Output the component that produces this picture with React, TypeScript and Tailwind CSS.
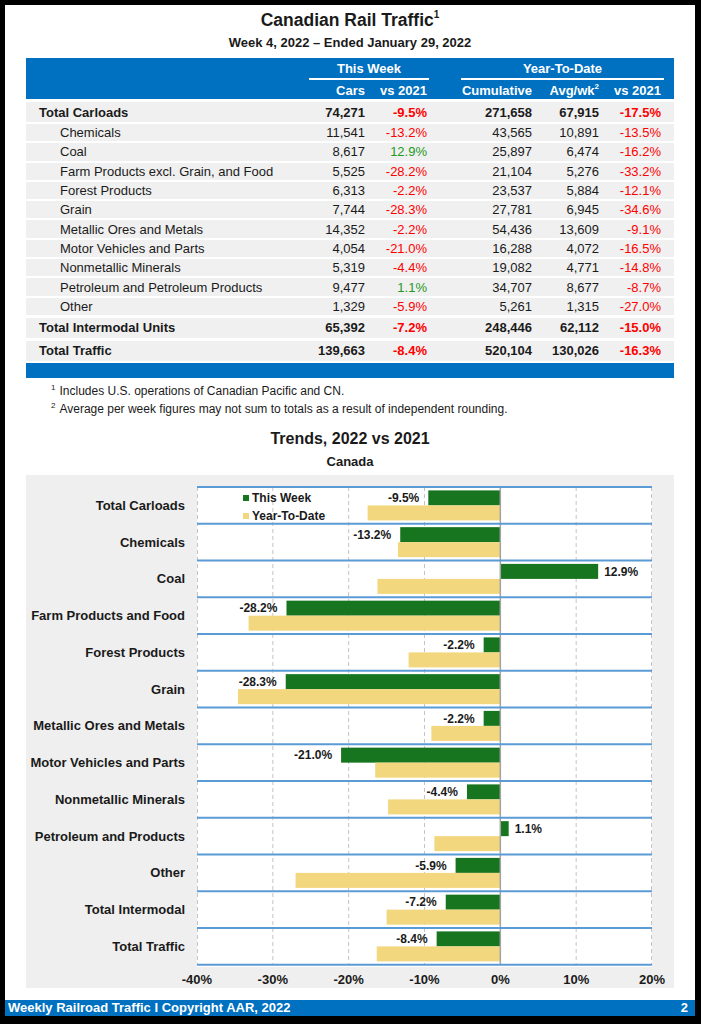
import React from 'react';

type Row = {
  name: string;
  total?: boolean;
  cars: string;
  vs: string;
  cum: string;
  avg: string;
  ytd: string;
};

const rows: Row[] = [
  { name: 'Total Carloads', total: true, cars: '74,271', vs: '-9.5%', cum: '271,658', avg: '67,915', ytd: '-17.5%' },
  { name: 'Chemicals', cars: '11,541', vs: '-13.2%', cum: '43,565', avg: '10,891', ytd: '-13.5%' },
  { name: 'Coal', cars: '8,617', vs: '12.9%', cum: '25,897', avg: '6,474', ytd: '-16.2%' },
  { name: 'Farm Products excl. Grain, and Food', cars: '5,525', vs: '-28.2%', cum: '21,104', avg: '5,276', ytd: '-33.2%' },
  { name: 'Forest Products', cars: '6,313', vs: '-2.2%', cum: '23,537', avg: '5,884', ytd: '-12.1%' },
  { name: 'Grain', cars: '7,744', vs: '-28.3%', cum: '27,781', avg: '6,945', ytd: '-34.6%' },
  { name: 'Metallic Ores and Metals', cars: '14,352', vs: '-2.2%', cum: '54,436', avg: '13,609', ytd: '-9.1%' },
  { name: 'Motor Vehicles and Parts', cars: '4,054', vs: '-21.0%', cum: '16,288', avg: '4,072', ytd: '-16.5%' },
  { name: 'Nonmetallic Minerals', cars: '5,319', vs: '-4.4%', cum: '19,082', avg: '4,771', ytd: '-14.8%' },
  { name: 'Petroleum and Petroleum Products', cars: '9,477', vs: '1.1%', cum: '34,707', avg: '8,677', ytd: '-8.7%' },
  { name: 'Other', cars: '1,329', vs: '-5.9%', cum: '5,261', avg: '1,315', ytd: '-27.0%' },
  { name: 'Total Intermodal Units', total: true, cars: '65,392', vs: '-7.2%', cum: '248,446', avg: '62,112', ytd: '-15.0%' },
  { name: 'Total Traffic', total: true, cars: '139,663', vs: '-8.4%', cum: '520,104', avg: '130,026', ytd: '-16.3%' },
];

const trends = [
  { name: 'Total Carloads', week: -9.5, ytd: -17.5 },
  { name: 'Chemicals', week: -13.2, ytd: -13.5 },
  { name: 'Coal', week: 12.9, ytd: -16.2 },
  { name: 'Farm Products and Food', week: -28.2, ytd: -33.2 },
  { name: 'Forest Products', week: -2.2, ytd: -12.1 },
  { name: 'Grain', week: -28.3, ytd: -34.6 },
  { name: 'Metallic Ores and Metals', week: -2.2, ytd: -9.1 },
  { name: 'Motor Vehicles and Parts', week: -21.0, ytd: -16.5 },
  { name: 'Nonmetallic Minerals', week: -4.4, ytd: -14.8 },
  { name: 'Petroleum and Products', week: 1.1, ytd: -8.7 },
  { name: 'Other', week: -5.9, ytd: -27.0 },
  { name: 'Total Intermodal', week: -7.2, ytd: -15.0 },
  { name: 'Total Traffic', week: -8.4, ytd: -16.3 },
];

const FONT = '"Liberation Sans", Arial, sans-serif';
const GRID = 'grid grid-cols-[274px_65px_62px_105px_67px_62px_13px]';

const pctColor = (v: string) => (v.startsWith('-') ? 'text-[#ff0000]' : 'text-[#1e9a1e]');

function TableRow({ r }: { r: Row }) {
  const base = r.total
    ? 'h-[20px] mt-[3px] font-bold'
    : 'h-[17.3px] mt-[2px]';
  return (
    <div className={`${GRID} ${base} items-center bg-[#f0f0f0] text-[13px] leading-none text-[#1a1a1a]`}>
      <div className={r.total ? 'pl-[13px]' : 'pl-[34px]'}>{r.name}</div>
      <div className="text-right">{r.cars}</div>
      <div className={`text-right ${pctColor(r.vs)}`}>{r.vs}</div>
      <div className="text-right">{r.cum}</div>
      <div className="text-right">{r.avg}</div>
      <div className={`text-right ${pctColor(r.ytd)}`}>{r.ytd}</div>
      <div />
    </div>
  );
}

const ROW = 36.75;

function TrendChart() {
  const W = 455;
  const H = ROW * trends.length + 3;
  const k = W / 60;
  const zero = 40 * k;
  const ticks = [-40, -30, -20, -10, 0, 10, 20];

  return (
    <svg width={W} height={H} className="block bg-white" fontFamily={FONT}>
      {ticks.filter(t => t !== 0).map(t => {
        const x = Math.min(Math.max((t + 40) * k, 0.5), W - 0.5);
        return <line key={t} x1={x} x2={x} y1={1} y2={H - 2} stroke="#c4c4c4" strokeWidth={1} strokeDasharray="4 3" />;
      })}
      {trends.map((c, i) => {
        const top = 1 + i * ROW;
        const wx = c.week < 0 ? zero + c.week * k : zero;
        const ww = Math.abs(c.week) * k;
        const yx = c.ytd < 0 ? zero + c.ytd * k : zero;
        const yw = Math.abs(c.ytd) * k;
        const label = `${c.week.toFixed(1)}%`;
        return (
          <g key={c.name}>
            <rect x={wx} y={top + 3.4} width={ww} height={15} fill="#17751f" />
            <rect x={yx} y={top + 18.4} width={yw} height={15} fill="#f2d77f" />
            <text
              x={c.week < 0 ? wx - 9 : zero + ww + 6}
              y={top + 11}
              textAnchor={c.week < 0 ? 'end' : 'start'}
              dominantBaseline="central"
              fontSize={12}
              fontWeight="bold"
              fill="#1a1a1a"
            >
              {label}
            </text>
          </g>
        );
      })}
      <line x1={zero} x2={zero} y1={1} y2={H - 2} stroke="#a3a3a3" strokeWidth={1.5} />
      {trends.map((_, i) => (
        <line key={i} x1={0} x2={W} y1={1 + i * ROW} y2={1 + i * ROW} stroke="#5b9bd5" strokeWidth={2} />
      ))}
      <line x1={0} x2={W} y1={1 + trends.length * ROW} y2={1 + trends.length * ROW} stroke="#5b9bd5" strokeWidth={2} />

      {/* legend */}
      <rect x={46} y={9} width={6} height={6} fill="#17751f" />
      <text x={55} y={12} dominantBaseline="central" fontSize={12} fontWeight="bold" fill="#1a1a1a">This Week</text>
      <rect x={46} y={27} width={6} height={6} fill="#f2d77f" />
      <text x={55} y={30} dominantBaseline="central" fontSize={12} fontWeight="bold" fill="#1a1a1a">Year-To-Date</text>
    </svg>
  );
}

export default function App() {
  return (
    <div
      className="w-[701px] h-[1024px] bg-black pt-[5px] pl-[5px] pr-[6px] pb-[8px]"
      style={{ fontFamily: FONT }}
    >
      <div className="h-full bg-white flex flex-col text-[#1a1a1a]">
        {/* Title */}
        <h1 className="pt-[4px] text-center text-[17.5px] leading-[22px] font-bold">
          Canadian Rail Traffic<sup className="text-[10px] top-[-8px]">1</sup>
        </h1>
        <p className="mt-[4px] text-center text-[13px] leading-[16px] font-bold">
          Week 4, 2022 – Ended January 29, 2022
        </p>

        {/* Table */}
        <section className="mt-[7px] mx-[21px]">
          <div className="bg-[#0070c0] text-white font-bold text-[13px] h-[41px]">
            <div className="flex pt-[2px]">
              <div className="w-[283px]" />
              <div className="w-[120px] h-[20px] leading-[18px] text-center border-b-2 border-white">This Week</div>
              <div className="w-[32px]" />
              <div className="w-[203px] h-[20px] leading-[18px] text-center border-b-2 border-white">Year-To-Date</div>
            </div>
            <div className={`${GRID} pt-[2px] leading-[17px]`}>
              <div />
              <div className="text-right">Cars</div>
              <div className="text-right">vs 2021</div>
              <div className="text-right">Cumulative</div>
              <div className="text-right">Avg/wk<sup className="text-[8px] top-[-6px]">2</sup></div>
              <div className="text-right">vs 2021</div>
              <div />
            </div>
          </div>

          {rows.map(r => (
            <TableRow key={r.name} r={r} />
          ))}

          <div className="mt-[2px] h-[15px] bg-[#0070c0]" />
        </section>

        {/* Footnotes */}
        <div className="mx-[21px] pl-[25px] text-[12px] leading-[16px] text-[#1a1a1a]">
          <p className="mt-[5px]"><sup className="text-[8px] top-[-5px] mr-[4px]">1</sup>Includes U.S. operations of Canadian Pacific and CN.</p>
          <p className="mt-[2px]"><sup className="text-[8px] top-[-5px] mr-[4px]">2</sup>Average per week figures may not sum to totals as a result of independent rounding.</p>
        </div>

        {/* Chart */}
        <h2 className="mt-[12px] text-center text-[16px] leading-[20px] font-bold">Trends, 2022 vs 2021</h2>
        <p className="mt-[5px] text-center text-[13px] leading-[16px] font-bold">Canada</p>

        <section className="mt-[5px] mx-[21px] bg-[#efefef] pt-[11px]">
          <div className="flex">
            <div className="w-[159px] pt-[1px] flex flex-col">
              {trends.map(c => (
                <div key={c.name} className="h-[36.75px] flex items-center justify-end text-[13px] font-bold leading-none">
                  {c.name}
                </div>
              ))}
            </div>
            <div className="ml-[12px]">
              <TrendChart />
            </div>
          </div>
          <div className="ml-[133px] w-[531px] grid grid-cols-7 mt-[5px] text-[13px] leading-[16px] font-bold text-center">
            {['-40%', '-30%', '-20%', '-10%', '0%', '10%', '20%'].map(t => (
              <div key={t}>{t}</div>
            ))}
          </div>
        </section>

        {/* Footer */}
        <footer className="mt-auto h-[16px] bg-[#0070c0] text-white font-bold text-[13px] leading-[16px] flex justify-between pl-[3px] pr-[7px]">
          <span>Weekly Railroad Traffic I Copyright AAR, 2022</span>
          <span>2</span>
        </footer>
      </div>
    </div>
  );
}
